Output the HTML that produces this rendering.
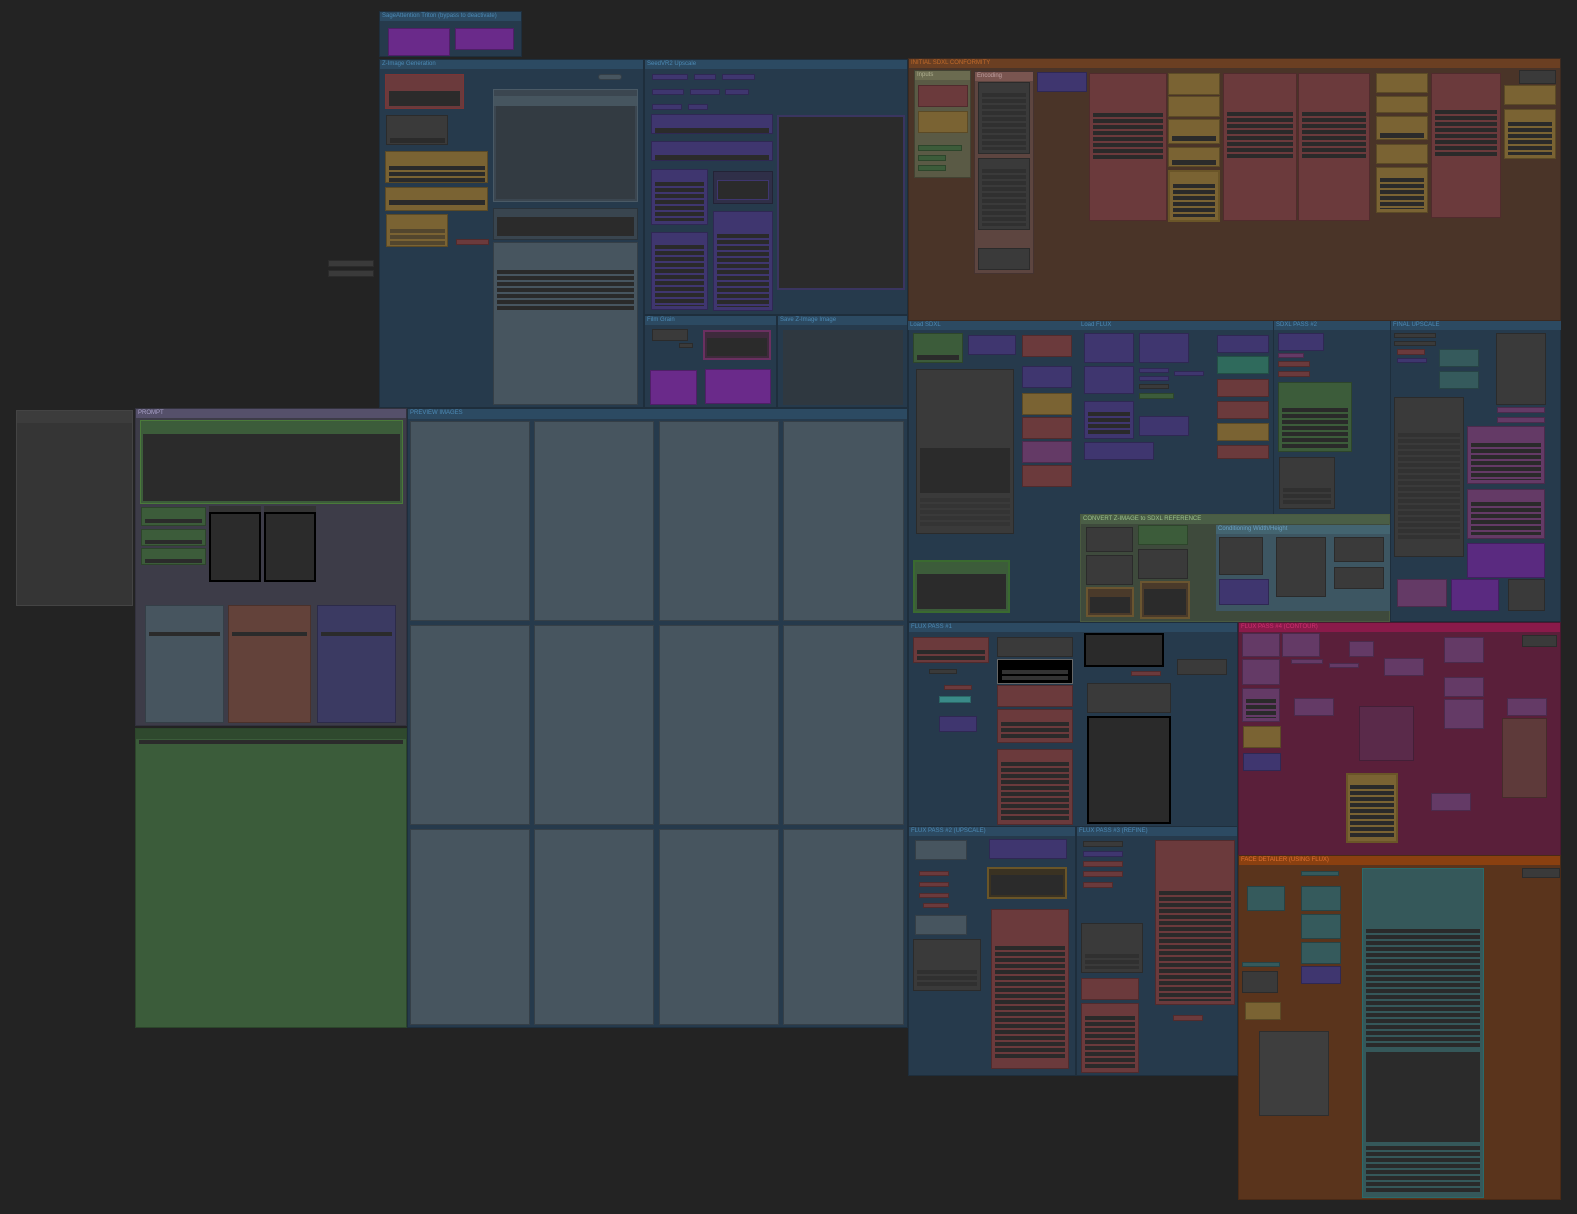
<!DOCTYPE html>
<html><head><meta charset="utf-8"><style>
*{margin:0;padding:0;box-sizing:border-box}
body{width:1577px;height:1214px;background:#232323;position:relative;overflow:hidden;font-family:"Liberation Sans",sans-serif}
div{position:absolute}
.g{background:#263a4c;border:1px solid #1e2e3c}
.t{left:0;right:0;top:0;height:9px;background:#2c4a62;font-size:6px;line-height:9px;color:#4c8ab5;padding-left:2px;white-space:nowrap;overflow:hidden}
.n{border:1px solid rgba(0,0,0,.25)}
.h{left:0;right:0;top:0;height:7px;background:rgba(0,0,0,.2)}
.w{background:repeating-linear-gradient(#2a2a2a 0 4px,rgba(0,0,0,0) 4px 6px)}
.dk{background:#2b2b2b}
.R{background:#6b3a3c}.Y{background:#7a6333}.P{background:#3f366f}.M{background:#6a2a8a}.S{background:#47555f}.G{background:#3c5c3a}.K{background:#3a3a3a}.T{background:#355a5c}.V{background:#643a66}
</style></head><body>

<!-- small loose nodes -->
<div class="n K" style="left:328px;top:260px;width:46px;height:7px"></div>
<div class="n K" style="left:328px;top:270px;width:46px;height:7px"></div>

<!-- Sage attention -->
<div class="g" style="left:379px;top:11px;width:143px;height:46px"><div class="t">SageAttention Triton (bypass to deactivate)</div>
<div class="n M" style="left:8px;top:16px;width:62px;height:28px"></div>
<div class="n M" style="left:75px;top:16px;width:59px;height:22px"></div></div>

<!-- Z-Image Generation -->
<div class="g" style="left:379px;top:59px;width:265px;height:349px"><div class="t">Z-Image Generation</div>
<div class="n R" style="left:5px;top:14px;width:79px;height:35px;border-color:#7a3535"><div class="dk" style="left:3px;top:16px;width:71px;height:15px"></div></div>
<div class="n K" style="left:6px;top:55px;width:62px;height:30px"><div class="dk" style="left:3px;top:22px;width:55px;height:5px"></div></div>
<div class="n Y" style="left:5px;top:91px;width:103px;height:32px"><div class="w" style="left:3px;top:14px;width:96px;height:16px"></div></div>
<div class="n Y" style="left:5px;top:127px;width:103px;height:24px"><div class="dk" style="left:3px;top:12px;width:96px;height:5px"></div></div>
<div class="n Y" style="left:6px;top:154px;width:62px;height:33px"><div class="w" style="left:3px;top:14px;width:55px;height:16px;opacity:.5"></div></div>
<div class="n R" style="left:76px;top:179px;width:33px;height:6px"></div>
<div class="n S" style="left:218px;top:14px;width:24px;height:6px;border-radius:3px"></div>
<div class="n S" style="left:113px;top:29px;width:145px;height:113px;background:#3b4650;border-color:#4a5a66"><div style="left:0;right:0;top:6px;height:10px;background:#46555f"></div><div style="left:2px;top:16px;right:2px;bottom:2px;background:#333b42"></div></div>
<div class="n" style="left:113px;top:148px;width:145px;height:32px;background:#39454f"><div class="dk" style="left:3px;top:8px;right:3px;bottom:3px"></div></div>
<div class="n S" style="left:113px;top:182px;width:145px;height:163px"><div class="w" style="left:3px;top:27px;right:3px;height:40px"></div></div>
</div>

<!-- SeedVR2 Upscale -->
<div class="g" style="left:644px;top:59px;width:264px;height:256px"><div class="t">SeedVR2 Upscale</div>
<div class="n P" style="left:7px;top:14px;width:36px;height:6px"></div><div class="n P" style="left:49px;top:14px;width:22px;height:6px"></div><div class="n P" style="left:77px;top:14px;width:33px;height:6px"></div>
<div class="n P" style="left:7px;top:29px;width:32px;height:6px"></div><div class="n P" style="left:45px;top:29px;width:30px;height:6px"></div><div class="n P" style="left:80px;top:29px;width:24px;height:6px"></div>
<div class="n P" style="left:7px;top:44px;width:30px;height:6px"></div><div class="n P" style="left:43px;top:44px;width:20px;height:6px"></div>
<div class="n P" style="left:6px;top:54px;width:122px;height:20px"><div class="dk" style="left:3px;top:13px;right:3px;height:5px"></div></div>
<div class="n P" style="left:6px;top:81px;width:122px;height:20px"><div class="dk" style="left:3px;top:13px;right:3px;height:5px"></div></div>
<div class="n P" style="left:6px;top:109px;width:57px;height:56px"><div class="w" style="left:3px;top:12px;right:3px;bottom:3px"></div></div>
<div class="n P" style="left:68px;top:111px;width:60px;height:33px;background:#2f2f48"><div class="dk" style="left:3px;top:8px;right:3px;bottom:3px;border:1px solid #3f366f"></div></div>
<div class="n P" style="left:6px;top:172px;width:57px;height:78px"><div class="w" style="left:3px;top:12px;right:3px;bottom:3px"></div></div>
<div class="n P" style="left:68px;top:151px;width:60px;height:100px"><div class="w" style="left:3px;top:22px;right:3px;bottom:3px"></div></div>
<div style="left:132px;top:55px;width:128px;height:175px;background:#2b2b2b;border:2px solid #3a3560"></div>
</div>

<!-- Film Grain -->
<div class="g" style="left:644px;top:315px;width:133px;height:93px"><div class="t">Film Grain</div>
<div class="n K" style="left:7px;top:13px;width:36px;height:12px"></div>
<div class="n K" style="left:34px;top:27px;width:14px;height:5px"></div>
<div class="n" style="left:58px;top:14px;width:68px;height:30px;background:#3e2a3c;border:2px solid #6a3060"><div class="dk" style="left:2px;top:6px;right:2px;bottom:2px"></div></div>
<div class="n M" style="left:5px;top:54px;width:47px;height:35px"></div>
<div class="n M" style="left:60px;top:53px;width:66px;height:35px"></div></div>
<div class="g" style="left:777px;top:315px;width:131px;height:93px"><div class="t">Save Z-Image Image</div>
<div style="left:5px;top:14px;width:120px;height:75px;background:#2f3840"></div></div>

<!-- INITIAL SDXL CONFORMITY -->
<div class="g" style="left:908px;top:58px;width:653px;height:263px;background:#4a3428;border-color:#3c2a20"><div class="t" style="background:#6b3f22;color:#c06a2a">INITIAL SDXL CONFORMITY</div>
<div class="n" style="left:5px;top:11px;width:57px;height:108px;background:#5a5a45"><div class="t" style="background:#6b6b50;color:#b0b090">Inputs</div>
<div class="n R" style="left:3px;top:14px;width:50px;height:22px"></div><div class="n Y" style="left:3px;top:40px;width:50px;height:22px"></div>
<div class="n G" style="left:3px;top:74px;width:44px;height:6px"></div><div class="n G" style="left:3px;top:84px;width:28px;height:6px"></div><div class="n G" style="left:3px;top:94px;width:28px;height:6px"></div></div>
<div class="n" style="left:65px;top:12px;width:60px;height:203px;background:#5d4540"><div class="t" style="background:#7a5550;color:#c0a0a0">Encoding</div>
<div class="n K" style="left:3px;top:10px;width:52px;height:72px"><div class="w" style="left:3px;top:10px;right:3px;bottom:3px;opacity:.6"></div></div>
<div class="n K" style="left:3px;top:86px;width:52px;height:72px"><div class="w" style="left:3px;top:10px;right:3px;bottom:3px;opacity:.6"></div></div>
<div class="n K" style="left:3px;top:176px;width:52px;height:22px"></div></div>
<div class="n P" style="left:128px;top:13px;width:50px;height:20px"></div>
<div class="n R" style="left:180px;top:14px;width:78px;height:148px"><div class="w" style="left:3px;top:39px;right:3px;height:47px"></div></div>
<div class="n Y" style="left:259px;top:14px;width:52px;height:22px"></div>
<div class="n Y" style="left:259px;top:37px;width:52px;height:21px"></div>
<div class="n Y" style="left:259px;top:60px;width:52px;height:25px"><div class="dk" style="left:3px;top:16px;right:3px;height:5px"></div></div>
<div class="n Y" style="left:259px;top:88px;width:52px;height:20px"><div class="dk" style="left:3px;top:12px;right:3px;height:5px"></div></div>
<div class="n Y" style="left:259px;top:111px;width:52px;height:52px;border:2px solid #6a5528"><div class="w" style="left:3px;top:12px;right:3px;bottom:3px"></div></div>
<div class="n R" style="left:314px;top:14px;width:74px;height:148px"><div class="w" style="left:3px;top:38px;right:3px;height:47px"></div></div>
<div class="n R" style="left:389px;top:14px;width:72px;height:148px"><div class="w" style="left:3px;top:38px;right:3px;height:47px"></div></div>
<div class="n Y" style="left:467px;top:14px;width:52px;height:20px"></div>
<div class="n Y" style="left:467px;top:37px;width:52px;height:17px"></div>
<div class="n Y" style="left:467px;top:57px;width:52px;height:24px"><div class="dk" style="left:3px;top:16px;right:3px;height:5px"></div></div>
<div class="n Y" style="left:467px;top:85px;width:52px;height:20px"></div>
<div class="n Y" style="left:467px;top:108px;width:52px;height:46px"><div class="w" style="left:3px;top:10px;right:3px;bottom:3px"></div></div>
<div class="n R" style="left:522px;top:14px;width:70px;height:145px"><div class="w" style="left:3px;top:36px;right:3px;height:47px"></div></div>
<div class="n K" style="left:610px;top:11px;width:37px;height:14px"></div>
<div class="n Y" style="left:595px;top:26px;width:52px;height:20px"></div>
<div class="n Y" style="left:595px;top:50px;width:52px;height:50px"><div class="w" style="left:3px;top:12px;right:3px;bottom:3px"></div></div>
</div>

<!-- Middle right region -->
<div class="g" style="left:908px;top:321px;width:653px;height:301px"></div>
<div class="g" style="left:908px;top:321px;width:171px;height:301px;background:none;border:none"><div class="t">Load SDXL</div>
<div class="n G" style="left:5px;top:12px;width:50px;height:30px"><div class="dk" style="left:3px;top:21px;right:3px;height:5px"></div></div>
<div class="n P" style="left:60px;top:14px;width:48px;height:20px"></div>
<div class="n R" style="left:114px;top:14px;width:50px;height:22px"></div>
<div class="n K" style="left:8px;top:48px;width:98px;height:165px"><div class="dk" style="left:3px;top:78px;right:3px;height:45px"></div><div class="w" style="left:3px;top:128px;right:3px;height:30px;opacity:.4"></div></div>
<div class="n P" style="left:114px;top:45px;width:50px;height:22px"></div>
<div class="n Y" style="left:114px;top:72px;width:50px;height:22px"></div>
<div class="n R" style="left:114px;top:96px;width:50px;height:22px"></div>
<div class="n V" style="left:114px;top:120px;width:50px;height:22px"></div>
<div class="n R" style="left:114px;top:144px;width:50px;height:22px"></div>
<div class="n G" style="left:5px;top:239px;width:97px;height:53px;border:2px solid #3a6a30"><div class="dk" style="left:2px;top:12px;right:2px;bottom:2px"></div></div></div>
<div style="left:1079px;top:321px;width:194px;height:193px"><div class="t">Load FLUX</div>
<div class="n P" style="left:5px;top:12px;width:50px;height:30px"></div><div class="n P" style="left:60px;top:12px;width:50px;height:30px"></div>
<div class="n P" style="left:5px;top:45px;width:50px;height:28px"></div><div class="n P" style="left:60px;top:47px;width:30px;height:5px"></div><div class="n P" style="left:60px;top:55px;width:30px;height:5px"></div><div class="n P" style="left:95px;top:50px;width:30px;height:5px"></div><div class="n K" style="left:60px;top:63px;width:30px;height:5px"></div><div class="n G" style="left:60px;top:72px;width:35px;height:6px"></div>
<div class="n P" style="left:5px;top:80px;width:50px;height:38px"><div class="w" style="left:3px;top:10px;right:3px;bottom:3px"></div></div>
<div class="n P" style="left:60px;top:95px;width:50px;height:20px"></div>
<div class="n P" style="left:5px;top:121px;width:70px;height:18px"></div>
<div class="n P" style="left:138px;top:14px;width:52px;height:18px"></div>
<div class="n T" style="left:138px;top:35px;width:52px;height:18px;background:#2f6a5c"></div>
<div class="n R" style="left:138px;top:58px;width:52px;height:18px"></div>
<div class="n R" style="left:138px;top:80px;width:52px;height:18px"></div>
<div class="n Y" style="left:138px;top:102px;width:52px;height:18px"></div>
<div class="n R" style="left:138px;top:124px;width:52px;height:14px"></div></div>
<div style="left:1273px;top:321px;width:117px;height:193px;border-left:1px solid #1e2e3c"><div class="t">SDXL PASS #2</div>
<div class="n P" style="left:4px;top:12px;width:46px;height:18px"></div>
<div class="n V" style="left:4px;top:32px;width:26px;height:5px"></div><div class="n R" style="left:4px;top:40px;width:32px;height:6px"></div><div class="n R" style="left:4px;top:50px;width:32px;height:6px"></div>
<div class="n G" style="left:4px;top:61px;width:74px;height:70px"><div class="w" style="left:3px;top:25px;right:3px;bottom:3px"></div></div>
<div class="n K" style="left:5px;top:136px;width:56px;height:52px"><div class="w" style="left:3px;top:30px;right:3px;bottom:3px;opacity:.6"></div></div></div>
<div style="left:1390px;top:321px;width:171px;height:301px;border-left:1px solid #1e2e3c"><div class="t">FINAL UPSCALE</div>
<div class="n K" style="left:3px;top:12px;width:42px;height:5px"></div><div class="n K" style="left:3px;top:20px;width:42px;height:5px"></div><div class="n R" style="left:6px;top:28px;width:28px;height:6px"></div><div class="n P" style="left:6px;top:37px;width:30px;height:5px"></div>
<div class="n T" style="left:48px;top:28px;width:40px;height:18px"></div><div class="n T" style="left:48px;top:50px;width:40px;height:18px"></div>
<div class="n K" style="left:105px;top:12px;width:50px;height:72px"></div>
<div class="n K" style="left:3px;top:76px;width:70px;height:160px"><div class="w" style="left:3px;top:35px;right:3px;bottom:15px;opacity:.5"></div></div>
<div class="n V" style="left:106px;top:86px;width:48px;height:6px"></div><div class="n V" style="left:106px;top:96px;width:48px;height:6px"></div>
<div class="n V" style="left:76px;top:105px;width:78px;height:58px"><div class="w" style="left:3px;top:16px;right:3px;bottom:3px"></div></div>
<div class="n V" style="left:76px;top:168px;width:78px;height:50px"><div class="w" style="left:3px;top:12px;right:3px;bottom:3px"></div></div>
<div class="n M" style="left:76px;top:222px;width:78px;height:35px;background:#5a2a80"></div>
<div class="n V" style="left:6px;top:258px;width:50px;height:28px"></div><div class="n M" style="left:60px;top:258px;width:48px;height:32px;background:#5a2a80"></div><div class="n K" style="left:117px;top:258px;width:37px;height:32px"></div></div>
<div style="left:1080px;top:514px;width:310px;height:108px;background:#3e4a3c;border:1px solid #4a5a40"><div class="t" style="background:#4a5e46;color:#9ac08a">CONVERT Z-IMAGE to SDXL REFERENCE</div>
<div class="n K" style="left:5px;top:12px;width:47px;height:25px"></div><div class="n G" style="left:57px;top:10px;width:50px;height:20px"></div>
<div class="n K" style="left:5px;top:40px;width:47px;height:30px"></div><div class="n K" style="left:57px;top:34px;width:50px;height:30px"></div>
<div class="n" style="left:5px;top:72px;width:48px;height:30px;background:#4a3a2a;border:2px solid #6a5530"><div class="dk" style="left:2px;top:8px;right:2px;bottom:2px"></div></div>
<div class="n" style="left:59px;top:66px;width:50px;height:38px;background:#4a3a2a;border:2px solid #6a5530"><div class="dk" style="left:2px;top:6px;right:2px;bottom:2px"></div></div>
<div style="left:135px;top:10px;width:174px;height:86px;background:#3d5662"><div class="t" style="background:#436470;color:#6aa0c0">Conditioning Width/Height</div>
<div class="n K" style="left:3px;top:12px;width:44px;height:38px"></div><div class="n P" style="left:3px;top:54px;width:50px;height:26px"></div>
<div class="n K" style="left:60px;top:12px;width:50px;height:60px"></div><div class="n K" style="left:118px;top:12px;width:50px;height:25px"></div><div class="n K" style="left:118px;top:42px;width:50px;height:22px"></div></div></div>

<!-- FLUX PASS #1 -->
<div class="g" style="left:908px;top:622px;width:330px;height:205px"><div class="t">FLUX PASS #1</div>
<div class="n R" style="left:4px;top:14px;width:76px;height:26px"><div class="w" style="left:3px;top:12px;right:3px;height:10px"></div></div>
<div class="n K" style="left:20px;top:46px;width:28px;height:5px"></div>
<div class="n R" style="left:35px;top:62px;width:28px;height:5px"></div>
<div class="n T" style="left:30px;top:73px;width:32px;height:7px;background:#3a8a88"></div>
<div class="n P" style="left:30px;top:93px;width:38px;height:16px"></div>
<div class="n K" style="left:88px;top:14px;width:76px;height:20px"></div>
<div class="n" style="left:88px;top:36px;width:76px;height:25px;background:#000;border:1px solid #666"><div style="left:4px;top:10px;right:4px;height:4px;background:#333"></div><div style="left:4px;top:16px;right:4px;height:4px;background:#333"></div></div>
<div class="n R" style="left:88px;top:62px;width:76px;height:22px"></div>
<div class="n R" style="left:88px;top:86px;width:76px;height:34px"><div class="w" style="left:3px;top:12px;right:3px;bottom:3px"></div></div>
<div class="n R" style="left:88px;top:126px;width:76px;height:76px"><div class="w" style="left:3px;top:12px;right:3px;bottom:3px"></div></div>
<div class="n K" style="left:175px;top:10px;width:80px;height:34px;background:#2a2a2a;border:2px solid #000"></div>
<div class="n R" style="left:222px;top:48px;width:30px;height:5px"></div>
<div class="n K" style="left:268px;top:36px;width:50px;height:16px"></div>
<div class="n K" style="left:178px;top:60px;width:84px;height:30px"></div>
<div class="n K" style="left:178px;top:93px;width:84px;height:108px;background:#2a2a2a;border:2px solid #000"></div></div>

<!-- FLUX PASS #4 -->
<div class="g" style="left:1238px;top:622px;width:323px;height:234px;background:#5a1f3a;border-color:#4a1830"><div class="t" style="background:#8a1a4a;color:#d03070">FLUX PASS #4 (CONTOUR)</div>
<div class="n V" style="left:3px;top:10px;width:38px;height:24px"></div><div class="n V" style="left:43px;top:10px;width:38px;height:24px"></div>
<div class="n V" style="left:110px;top:18px;width:25px;height:16px"></div>
<div class="n V" style="left:3px;top:36px;width:38px;height:26px"></div><div class="n V" style="left:52px;top:36px;width:32px;height:5px"></div><div class="n V" style="left:90px;top:40px;width:30px;height:5px"></div>
<div class="n V" style="left:3px;top:65px;width:38px;height:34px"><div class="w" style="left:3px;top:10px;right:3px;bottom:3px"></div></div>
<div class="n V" style="left:55px;top:75px;width:40px;height:18px"></div>
<div class="n V" style="left:145px;top:35px;width:40px;height:18px"></div>
<div class="n V" style="left:120px;top:83px;width:55px;height:55px;background:#5a2a4a"></div>
<div class="n V" style="left:205px;top:14px;width:40px;height:26px"></div><div class="n V" style="left:205px;top:54px;width:40px;height:20px"></div><div class="n V" style="left:205px;top:76px;width:40px;height:30px"></div>
<div class="n K" style="left:283px;top:12px;width:35px;height:12px"></div>
<div class="n V" style="left:268px;top:75px;width:40px;height:18px"></div>
<div class="n" style="left:263px;top:95px;width:45px;height:80px;background:#5e3a3a"></div>
<div class="n Y" style="left:4px;top:103px;width:38px;height:22px"></div>
<div class="n P" style="left:4px;top:130px;width:38px;height:18px"></div>
<div class="n Y" style="left:107px;top:150px;width:52px;height:70px;border:2px solid #6a5528"><div class="w" style="left:2px;top:10px;right:2px;bottom:2px"></div></div>
<div class="n V" style="left:192px;top:170px;width:40px;height:18px"></div></div>

<!-- FLUX PASS #2 / #3 -->
<div class="g" style="left:908px;top:826px;width:168px;height:250px"><div class="t">FLUX PASS #2 (UPSCALE)</div>
<div class="n S" style="left:6px;top:13px;width:52px;height:20px"></div>
<div class="n P" style="left:80px;top:12px;width:78px;height:20px"></div>
<div class="n" style="left:78px;top:40px;width:80px;height:32px;background:#3a3222;border:2px solid #6a5528"><div class="dk" style="left:2px;top:6px;right:2px;bottom:2px"></div></div>
<div class="n R" style="left:10px;top:44px;width:30px;height:5px"></div><div class="n R" style="left:10px;top:55px;width:30px;height:5px"></div><div class="n R" style="left:10px;top:66px;width:30px;height:5px"></div><div class="n R" style="left:14px;top:76px;width:26px;height:5px"></div>
<div class="n S" style="left:6px;top:88px;width:52px;height:20px"></div>
<div class="n K" style="left:4px;top:112px;width:68px;height:52px"><div class="w" style="left:3px;top:30px;right:3px;bottom:3px;opacity:.6"></div></div>
<div class="n R" style="left:82px;top:82px;width:78px;height:160px"><div class="w" style="left:3px;top:36px;right:3px;bottom:8px"></div></div></div>
<div class="g" style="left:1076px;top:826px;width:162px;height:250px"><div class="t">FLUX PASS #3 (REFINE)</div>
<div class="n K" style="left:6px;top:14px;width:40px;height:6px"></div><div class="n P" style="left:6px;top:24px;width:40px;height:6px"></div><div class="n R" style="left:6px;top:34px;width:40px;height:6px"></div><div class="n R" style="left:6px;top:44px;width:40px;height:6px"></div><div class="n R" style="left:6px;top:55px;width:30px;height:6px"></div>
<div class="n K" style="left:4px;top:96px;width:62px;height:50px"><div class="w" style="left:3px;top:30px;right:3px;bottom:3px;opacity:.6"></div></div>
<div class="n R" style="left:4px;top:151px;width:58px;height:22px"></div>
<div class="n R" style="left:4px;top:176px;width:58px;height:70px"><div class="w" style="left:3px;top:12px;right:3px;bottom:3px"></div></div>
<div class="n R" style="left:78px;top:13px;width:80px;height:165px"><div class="w" style="left:3px;top:50px;right:3px;bottom:3px"></div></div>
<div class="n R" style="left:96px;top:188px;width:30px;height:6px"></div></div>

<!-- FACE DETAILER -->
<div class="g" style="left:1238px;top:855px;width:323px;height:345px;background:#5a341c;border-color:#4a2a16"><div class="t" style="background:#8a4010;color:#e07030">FACE DETAILER (USING FLUX)</div>
<div class="n T" style="left:62px;top:15px;width:38px;height:5px"></div>
<div class="n T" style="left:8px;top:30px;width:38px;height:25px"></div>
<div class="n T" style="left:62px;top:30px;width:40px;height:25px"></div>
<div class="n T" style="left:62px;top:58px;width:40px;height:25px"></div>
<div class="n T" style="left:62px;top:86px;width:40px;height:22px"></div>
<div class="n T" style="left:3px;top:106px;width:38px;height:5px"></div>
<div class="n K" style="left:3px;top:115px;width:36px;height:22px"></div>
<div class="n P" style="left:62px;top:110px;width:40px;height:18px"></div>
<div class="n Y" style="left:6px;top:146px;width:36px;height:18px"></div>
<div class="n K" style="left:20px;top:175px;width:70px;height:85px;background:#3e3e3e"></div>
<div class="n T" style="left:123px;top:12px;width:122px;height:330px;background:#35585a;border:1px solid #2a6a6a"><div class="w" style="left:3px;top:60px;right:3px;height:120px"></div><div class="dk" style="left:3px;top:183px;right:3px;height:90px"></div><div class="w" style="left:3px;top:277px;right:3px;bottom:3px"></div></div>
<div class="n K" style="left:283px;top:12px;width:38px;height:10px"></div></div>

<!-- Left standalone -->
<div class="n" style="left:16px;top:410px;width:117px;height:196px;background:#353535;border:1px solid #444"><div class="h" style="height:12px;background:#3c3c3c"></div></div>

<!-- PROMPT group -->
<div class="g" style="left:135px;top:408px;width:272px;height:318px;background:#3d3c48;border-color:#33323e"><div class="t" style="background:#55506a;color:#a8a0c8">PROMPT</div>
<div class="n G" style="left:4px;top:11px;width:263px;height:84px;border:1px solid #4a7a3a"><div class="dk" style="left:2px;top:13px;right:2px;bottom:2px"></div></div>
<div class="n G" style="left:5px;top:98px;width:65px;height:19px"><div class="dk" style="left:3px;top:11px;right:3px;height:4px"></div></div>
<div class="n G" style="left:5px;top:120px;width:65px;height:17px"><div class="dk" style="left:3px;top:10px;right:3px;height:4px"></div></div>
<div class="n G" style="left:5px;top:139px;width:65px;height:17px"><div class="dk" style="left:3px;top:10px;right:3px;height:4px"></div></div>
<div style="left:73px;top:97px;width:52px;height:76px;background:#333"><div class="dk" style="left:0;top:6px;right:0;bottom:0;border:2px solid #000"></div></div>
<div style="left:128px;top:97px;width:52px;height:76px;background:#333"><div class="dk" style="left:0;top:6px;right:0;bottom:0;border:2px solid #000"></div></div>
<div class="n S" style="left:9px;top:196px;width:79px;height:118px"><div class="dk" style="left:3px;top:26px;right:3px;height:4px"></div></div>
<div class="n" style="left:92px;top:196px;width:83px;height:118px;background:#63423a"><div class="dk" style="left:3px;top:26px;right:3px;height:4px"></div></div>
<div class="n" style="left:181px;top:196px;width:79px;height:118px;background:#3b3a62"><div class="dk" style="left:3px;top:26px;right:3px;height:4px"></div></div></div>

<!-- Big green -->
<div class="n G" style="left:135px;top:728px;width:272px;height:300px;background:#3b5c3a"><div class="h" style="height:10px"></div><div class="dk" style="left:3px;top:11px;right:3px;height:4px"></div></div>

<!-- PREVIEW IMAGES -->
<div class="g" style="left:407px;top:408px;width:501px;height:620px"><div class="t" style="height:10px">PREVIEW IMAGES</div></div>
<div class="n S" style="left:410px;top:421px;width:120px;height:200px"></div><div class="n S" style="left:534px;top:421px;width:120px;height:200px"></div><div class="n S" style="left:659px;top:421px;width:120px;height:200px"></div><div class="n S" style="left:783px;top:421px;width:121px;height:200px"></div>
<div class="n S" style="left:410px;top:625px;width:120px;height:200px"></div><div class="n S" style="left:534px;top:625px;width:120px;height:200px"></div><div class="n S" style="left:659px;top:625px;width:120px;height:200px"></div><div class="n S" style="left:783px;top:625px;width:121px;height:200px"></div>
<div class="n S" style="left:410px;top:829px;width:120px;height:196px"></div><div class="n S" style="left:534px;top:829px;width:120px;height:196px"></div><div class="n S" style="left:659px;top:829px;width:120px;height:196px"></div><div class="n S" style="left:783px;top:829px;width:121px;height:196px"></div>

</body></html>
